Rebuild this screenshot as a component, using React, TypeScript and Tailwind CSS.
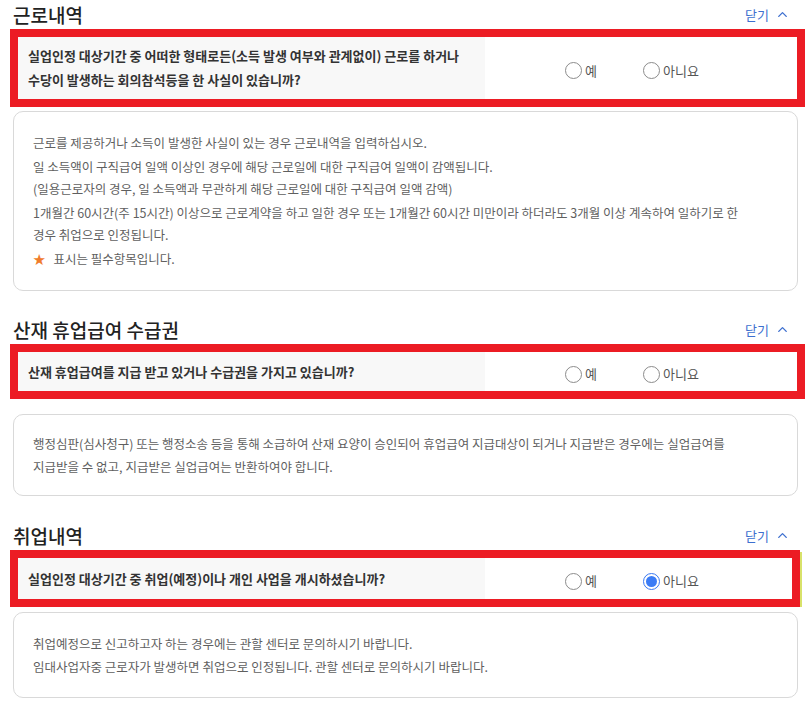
import { ChevronUp } from 'lucide-react';
import type { ReactNode } from 'react';

function Radio({ label, checked = false }: { label: string; checked?: boolean }) {
  return (
    <label className="flex items-center gap-[3px] text-[13px] text-[#555]">
      {checked ? (
        <span className="flex h-[17px] w-[17px] items-center justify-center rounded-full border border-[#3a78f0] bg-white">
          <span className="h-[11px] w-[11px] rounded-full bg-[#3b7cf5]" />
        </span>
      ) : (
        <span className="h-[17px] w-[17px] rounded-full border border-[#8c8c8c] bg-white" />
      )}
      <span>{label}</span>
    </label>
  );
}

type SectionProps = {
  title: string;
  question: ReactNode;
  answer: 'yes' | 'no' | null;
  rowHeight: string;
  cardClass: string;
  boxClass: string;
  extraLine?: boolean;
  children: ReactNode;
};

function Section({ title, question, answer, rowHeight, cardClass, boxClass, extraLine, children }: SectionProps) {
  return (
    <section>
      <div className="flex h-[29px] items-center justify-between pr-[8px]">
        <h2 className="text-[19px] font-medium leading-none text-[#222]">{title}</h2>
        <button className="flex items-center gap-[6px] text-[13px] text-[#3d6fcf]">
          닫기
          <ChevronUp className="h-[15px] w-[15px]" strokeWidth={2.2} />
        </button>
      </div>

      <div className={`flex ${boxClass}`}>
        <div className="flex-1 border-[8px] border-[#ec1c24]">
          <div className={`flex ${rowHeight}`}>
            <div className="flex w-[467px] items-center break-keep bg-[#f8f8f8] pl-[10px] text-[13px] font-semibold leading-[24px] text-[#333]">
              <p>{question}</p>
            </div>
            <div className="flex flex-1 items-center gap-[46px] bg-white pl-[80px] pt-[5px]">
              <Radio label="예" checked={answer === 'yes'} />
              <Radio label="아니요" checked={answer === 'no'} />
            </div>
          </div>
        </div>
        {extraLine && <div className="mt-[2px] w-[2px] bg-[#d8e26a]" />}
      </div>

      <div className={`break-keep rounded-[10px] border border-[#d9d9d9] bg-white pl-[19px] pr-[32px] text-[12.5px] leading-[22px] text-[#5f5f5f] ${cardClass}`}>
        {children}
      </div>
    </section>
  );
}

export default function App() {
  return (
    <div className="min-h-[710px] w-[812px] bg-white pl-[13px] pr-[14px] font-['Noto_Sans_CJK_KR','Noto_Sans',sans-serif]">
      <Section
        title="근로내역"
        answer={null}
        rowHeight="h-[62px]"
        boxClass="-ml-[3px] -mr-[7px]"
        cardClass="mt-[4px] h-[180px] pt-[20px]"
        question={
          <>
            실업인정 대상기간 중 어떠한 형태로든(소득 발생 여부와 관계없이) 근로를 하거나
            <br />
            수당이 발생하는 회의참석등을 한 사실이 있습니까?
          </>
        }
      >
        <p>근로를 제공하거나 소득이 발생한 사실이 있는 경우 근로내역을 입력하십시오.</p>
        <p className="mt-[2px]">
          일 소득액이 구직급여 일액 이상인 경우에 해당 근로일에 대한 구직급여 일액이 감액됩니다.
          <br />
          (일용근로자의 경우, 일 소득액과 무관하게 해당 근로일에 대한 구직급여 일액 감액)
        </p>
        <p className="mt-[2px]">
          1개월간 60시간(주 15시간) 이상으로 근로계약을 하고 일한 경우 또는 1개월간 60시간 미만이라 하더라도 3개월 이상 계속하여 일하기로 한
          <br />
          경우 취업으로 인정됩니다.
        </p>
        <p className="mt-[2px]">
          <span className="mr-[8px] text-[#f07c2c]">★</span>표시는 필수항목입니다.
        </p>
      </Section>

      <div className="mt-[24px]">
        <Section
          title="산재 휴업급여 수급권"
          answer={null}
          rowHeight="h-[39px]"
          boxClass="-ml-[3px] -mr-[7px]"
          cardClass="mt-[15px] h-[82px] pt-[17px] leading-[23px]"
          question="산재 휴업급여를 지급 받고 있거나 수급권을 가지고 있습니까?"
        >
          <p>
            행정심판(심사청구) 또는 행정소송 등을 통해 소급하여 산재 요양이 승인되어 휴업급여 지급대상이 되거나 지급받은 경우에는 실업급여를
            <br />
            지급받을 수 없고, 지급받은 실업급여는 반환하여야 합니다.
          </p>
        </Section>
      </div>

      <div className="mt-[25px]">
        <Section
          title="취업내역"
          answer="no"
          rowHeight="h-[41px]"
          boxClass="-ml-[3px] -mr-[4px]"
          extraLine
          cardClass="mt-[5px] h-[86px] pt-[19px] leading-[23px]"
          question="실업인정 대상기간 중 취업(예정)이나 개인 사업을 개시하셨습니까?"
        >
          <p>취업예정으로 신고하고자 하는 경우에는 관할 센터로 문의하시기 바랍니다.</p>
          <p>임대사업자중 근로자가 발생하면 취업으로 인정됩니다. 관할 센터로 문의하시기 바랍니다.</p>
        </Section>
      </div>
    </div>
  );
}
